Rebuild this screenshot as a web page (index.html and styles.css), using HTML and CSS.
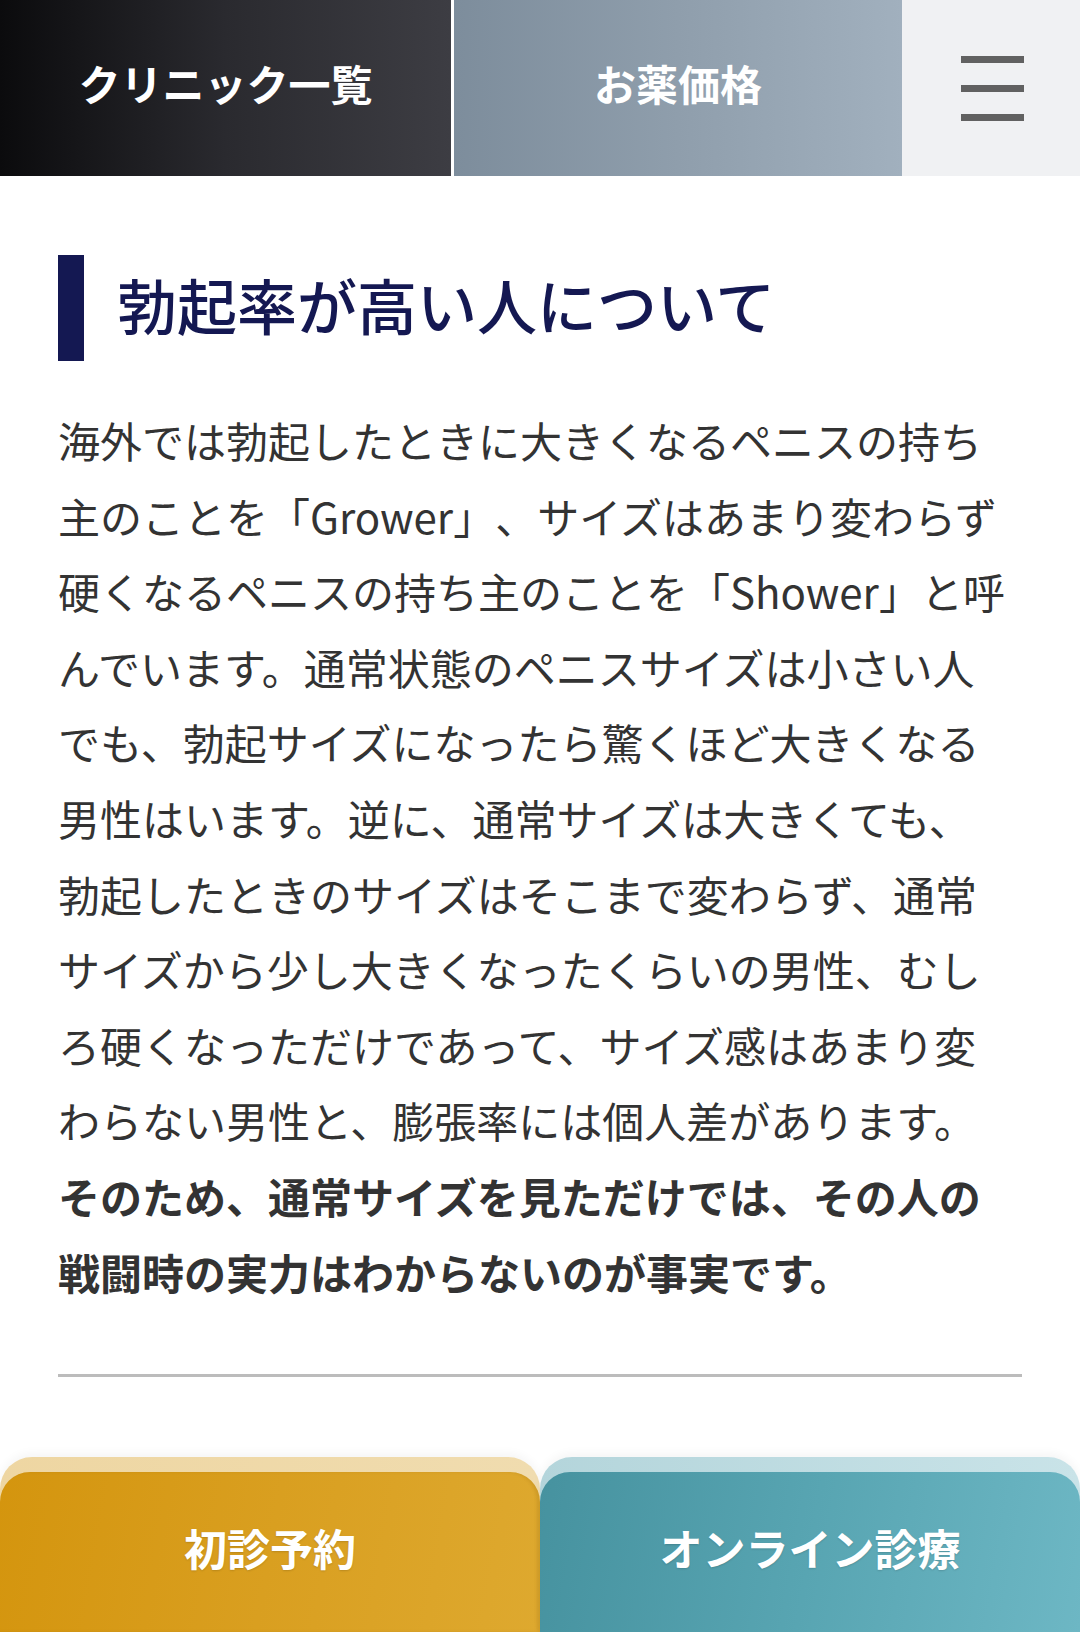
FILE: index.html
```html
<!DOCTYPE html>
<html lang="ja">
<head>
<meta charset="utf-8">
<title>勃起率が高い人について</title>
<link rel="stylesheet" href="styles.css">
</head>
<body>
<header class="topbar">
  <a class="tab tab-clinic">クリニック一覧</a>
  <a class="tab tab-price">お薬価格</a>
  <button class="menu" aria-label="menu">
    <span class="menu-line"></span>
    <span class="menu-line"></span>
    <span class="menu-line"></span>
  </button>
</header>
<main class="content">
  <h2 class="heading">勃起率が高い人について</h2>
  <p class="text">海外では勃起したときに大きくなるペニスの持ち主のことを「Grower」、サイズはあまり変わらず硬くなるペニスの持ち主のことを「Shower」と呼んでいます。通常状態のペニスサイズは小さい人でも、勃起サイズになったら驚くほど大きくなる男性はいます。逆に、通常サイズは大きくても、勃起したときのサイズはそこまで変わらず、通常サイズから少し大きくなったくらいの男性、むしろ硬くなっただけであって、サイズ感はあまり変わらない男性と、膨張率には個人差があります。<br><strong class="strong">そのため、通常サイズを見ただけでは、その人の戦闘時の実力はわからないのが事実です。</strong></p>
  <hr class="rule">
</main>
<footer class="cta">
  <a class="cta-btn cta-reserve"><span class="cta-inner">初診予約</span></a>
  <a class="cta-btn cta-online"><span class="cta-inner">オンライン診療</span></a>
</footer>
</body>
</html>
```
FILE: styles.css
```css
html, body {
  margin: 0;
  padding: 0;
  background: #fff;
}
body {
  width: 1080px;
  height: 1632px;
  overflow: hidden;
  font-family: "Noto Sans CJK JP", "Noto Sans", sans-serif;
  text-spacing-trim: space-all;
}
.topbar {
  display: grid;
  grid-template-columns: 451px 451px 1fr;
  height: 176px;
}
.tab {
  display: flex;
  align-items: center;
  justify-content: center;
  color: #fff;
  font-size: 42px;
  font-weight: 700;
  text-decoration: none;
  padding-bottom: 12px;
  box-sizing: border-box;
}
.tab-clinic {
  background: linear-gradient(90deg, #0b0b0d 0%, #2a2a2f 50%, #3d3d43 100%);
}
.tab-price {
  background: linear-gradient(90deg, #7d8d9c 0%, #8f9eac 50%, #a1b0be 100%);
  border-left: 3px solid #fff;
}
.menu {
  background: #f0f1f3;
  border: 0;
  margin: 0;
  padding: 0 0 0 59px;
  display: flex;
  flex-direction: column;
  justify-content: center;
  gap: 22px;
}
.menu-line {
  display: block;
  width: 63px;
  height: 7px;
  background: #616161;
}
.content {
  padding: 79px 58px 0;
}
.heading {
  margin: 0;
  border-left: 26px solid #141852;
  padding-left: 33px;
  height: 106px;
  line-height: 98px;
  font-size: 60px;
  font-weight: 500;
  color: #141852;
}
.text {
  margin: 41px 10px 0 0;
  font-size: 42px;
  line-height: 75.6px;
  color: #333;
  font-weight: 400;
}
.strong {
  font-weight: 700;
}
.rule {
  margin: 65px 0 0;
  border: 0;
  height: 3px;
  background: #bcbcbc;
}
.cta {
  margin-top: 80px;
  display: grid;
  grid-template-columns: 540px 540px;
  height: 175px;
}
.cta-btn {
  display: flex;
  flex-direction: column;
  padding-top: 15px;
  border-radius: 32px 32px 0 0;
  box-shadow: 0 -4px 10px rgba(0, 0, 0, 0.04);
  text-decoration: none;
}
.cta-reserve {
  background: linear-gradient(90deg, #eed6a2 0%, #f0dcaf 100%);
}
.cta-online {
  background: linear-gradient(90deg, #b4d5db 0%, #c9e3e8 100%);
}
.cta-inner {
  flex: 1;
  display: flex;
  align-items: center;
  justify-content: center;
  padding-bottom: 10px;
  border-radius: 30px 30px 0 0;
  color: #fff;
  font-size: 43px;
  font-weight: 700;
  text-shadow: 0 1px 2px rgba(0, 0, 0, 0.15);
}
.cta-reserve .cta-inner {
  background: linear-gradient(100deg, #d4950e 0%, #d99f20 50%, #dea92f 100%);
  box-shadow: inset -3px 0 3px rgba(120, 80, 0, 0.12);
}
.cta-online .cta-inner {
  background: linear-gradient(100deg, #46929f 0%, #58a5b2 50%, #6db7c4 100%);
}
```
